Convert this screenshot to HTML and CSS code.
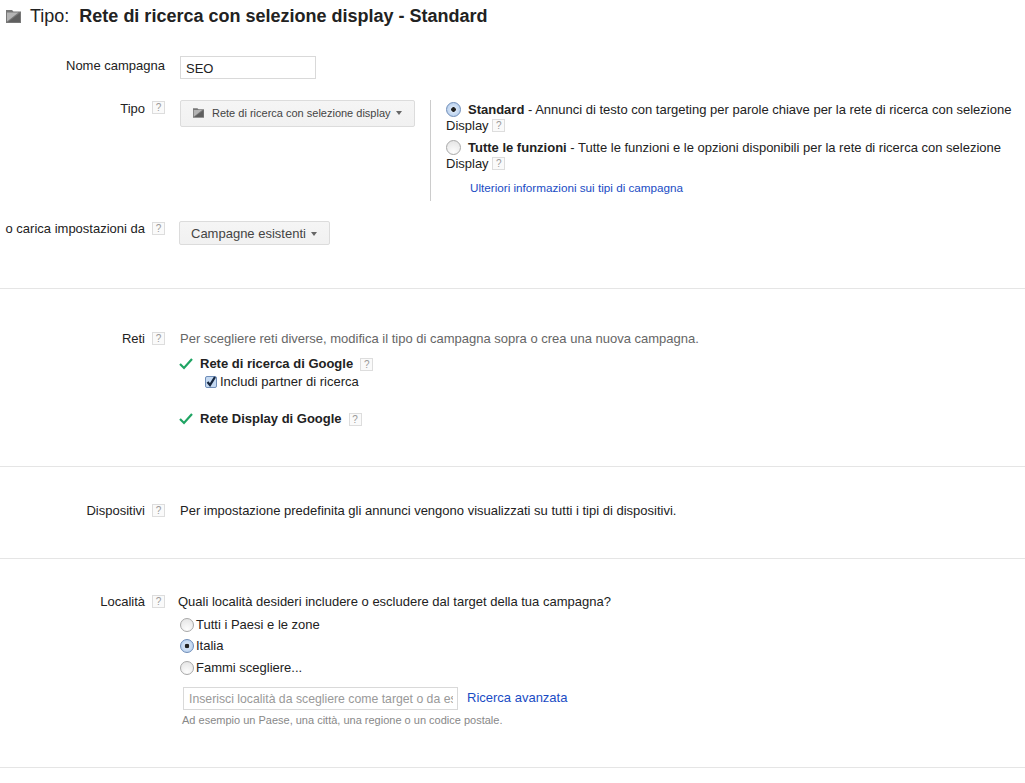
FILE: index.html
```html
<!DOCTYPE html>
<html lang="it">
<head>
<meta charset="utf-8">
<title>Tipo di campagna</title>
<link rel="stylesheet" href="styles.css">
</head>
<body>
<svg class="defs" width="0" height="0" aria-hidden="true">
  <defs>
    <symbol id="folder" viewBox="0 0 15 13">
      <path d="M0 0h6l1.5 1.5H15V13H0z" fill="#777"/>
      <path d="M1 2.5h11.5L1 11.5z" fill="#b4b4b4"/>
      <path d="M2 12 14 3v9z" fill="#5f5f5f"/>
    </symbol>
    <symbol id="check" viewBox="0 0 14 12">
      <path d="M1 6 5 10 13 1" fill="none" stroke="#1fa463" stroke-width="2.2"/>
    </symbol>
  </defs>
</svg>
<header class="title">
  <svg class="title-icon"><use href="#folder"/></svg>
  <span class="title-label">Tipo:</span>
  <strong class="title-value">Rete di ricerca con selezione display - Standard</strong>
</header>

<section class="section section-type">
  <div class="row row-name">
    <div class="label label-wide">Nome campagna</div>
    <div class="name-input">SEO</div>
  </div>
  <div class="row row-tipo">
    <div class="label">Tipo</div>
    <div class="help-slot"><span class="help">?</span></div>
    <div class="btn btn-type"><svg class="btn-icon"><use href="#folder"/></svg>Rete di ricerca con selezione display<span class="caret"></span></div>
    <div class="type-options">
      <p class="opt"><span class="radio on opt-radio"></span><b>Standard</b> - Annunci di testo con targeting per parole chiave per la rete di ricerca con selezione Display <span class="help">?</span></p>
      <p class="opt"><span class="radio opt-radio"></span><b>Tutte le funzioni</b> - Tutte le funzioni e le opzioni disponibili per la rete di ricerca con selezione Display <span class="help">?</span></p>
      <a class="link more">Ulteriori informazioni sui tipi di campagna</a>
    </div>
  </div>
  <div class="row row-load">
    <div class="label">o carica impostazioni da</div>
    <div class="help-slot"><span class="help">?</span></div>
    <div class="btn btn-load">Campagne esistenti<span class="caret"></span></div>
  </div>
</section>

<section class="section section-net">
  <div class="row">
    <div class="label">Reti</div>
    <div class="help-slot"><span class="help">?</span></div>
    <div class="content">
      <div class="muted">Per scegliere reti diverse, modifica il tipo di campagna sopra o crea una nuova campagna.</div>
      <div class="net net-first"><svg class="check"><use href="#check"/></svg><b>Rete di ricerca di Google</b><span class="help">?</span></div>
      <div class="partner"><span class="checkbox"><svg viewBox="0 0 12 12"><path d="M2.5 6 5 9 10 1" fill="none" stroke="#16263e" stroke-width="2.3"/></svg></span>Includi partner di ricerca</div>
      <div class="net net-second"><svg class="check"><use href="#check"/></svg><b>Rete Display di Google</b><span class="help">?</span></div>
    </div>
  </div>
</section>

<section class="section section-dev">
  <div class="row">
    <div class="label">Dispositivi</div>
    <div class="help-slot"><span class="help">?</span></div>
    <div class="content">Per impostazione predefinita gli annunci vengono visualizzati su tutti i tipi di dispositivi.</div>
  </div>
</section>

<section class="section section-loc">
  <div class="row">
    <div class="label">Località</div>
    <div class="help-slot"><span class="help">?</span></div>
    <div class="content content-loc">
      <div class="question">Quali località desideri includere o escludere dal target della tua campagna?</div>
      <div class="choice"><span class="radio"></span>Tutti i Paesi e le zone</div>
      <div class="choice"><span class="radio on"></span>Italia</div>
      <div class="choice"><span class="radio"></span>Fammi scegliere...</div>
      <div class="search">
        <div class="search-input"><span>Inserisci località da scegliere come target o da escludere</span></div>
        <a class="link adv">Ricerca avanzata</a>
      </div>
      <div class="hint">Ad esempio un Paese, una città, una regione o un codice postale.</div>
    </div>
  </div>
</section>
</body>
</html>
```

FILE: styles.css
```css
* { box-sizing: border-box; }
html, body { margin: 0; padding: 0; }
body {
  width: 1025px;
  height: 783px;
  overflow: hidden;
  background: #fff;
  color: #222;
  font-family: "Liberation Sans", Arial, sans-serif;
  font-size: 13px;
  line-height: 16px;
}
.defs { position: absolute; }
b { font-weight: 700; }
p { margin: 0; }

.title {
  display: flex;
  align-items: center;
  height: 32px;
  padding-left: 6px;
}
.title-icon { width: 15px; height: 13px; margin-right: 9px; }
.title-label { font-size: 18px; margin-right: 10px; }
.title-value { font-size: 18px; }

.section { border-bottom: 1px solid #e5e5e5; }
.section-type { height: 257px; padding-top: 24px; }
.section-net { height: 178px; padding-top: 42px; }
.section-dev { height: 92px; padding-top: 36px; }
.section-loc { height: 209px; padding-top: 35px; }

.row { display: flex; align-items: flex-start; }
.label { width: 145px; text-align: right; white-space: nowrap; flex: none; }
.label-wide { width: 165px; margin-right: 15px; padding-top: 1px; }
.help-slot { width: 35px; flex: none; padding-left: 7px; }
.help {
  display: inline-block;
  width: 13px;
  height: 13px;
  border: 1px solid #ddd;
  background: #fafafa;
  color: #999;
  font-size: 10px;
  line-height: 11px;
  text-align: center;
  vertical-align: 1px;
}

.row-name { height: 24px; margin-bottom: 20px; }
.row-name .label { padding-top: 2px; }
.name-input {
  width: 136px;
  height: 23px;
  border: 1px solid #d9d9d9;
  padding: 4px 5px;
  line-height: 15px;
}

.btn {
  display: flex;
  align-items: center;
  border: 1px solid #dcdcdc;
  border-radius: 2px;
  background: linear-gradient(#f5f5f5, #f1f1f1);
  color: #444;
  white-space: nowrap;
}
.btn-type { width: 235px; height: 27px; padding: 0 0 2px 12px; font-size: 11px; flex: none; }
.btn-icon { width: 11px; height: 10px; margin-right: 8px; }
.btn-load { width: 151px; height: 24px; padding: 1px 0 0 11px; margin-left: -1px; }
.caret {
  width: 0;
  height: 0;
  margin-left: 5px;
  border: 3.5px solid transparent;
  border-top: 4px solid #666;
  border-bottom: 0;
}

.row-tipo { height: 101px; margin-bottom: 20px; }
.row-tipo > .label { padding-top: 1px; }
.type-options {
  width: 595px;
  height: 101px;
  margin-left: 15px;
  padding: 2px 0 0 15px;
  border-left: 1px solid #ccc;
  flex: none;
  line-height: 16px;
}
.opt { margin-bottom: 6px; }
.opt-radio { margin: 0 7px 0 0; vertical-align: -3px; }
.more { display: block; padding-left: 24px; margin-top: 8px; font-size: 11.7px; line-height: 16px; }
.link { color: #1a4cc4; }

.radio {
  display: inline-block;
  width: 15px;
  height: 15px;
  border-radius: 50%;
  border: 1px solid #a8a8a8;
  background: radial-gradient(circle at 50% 85%, #fdfdfd, #e2e2e2);
  flex: none;
}
.radio.on {
  border-color: #6f8db8;
  background: radial-gradient(circle, #222 0 2px, transparent 2.6px), radial-gradient(circle, #e9f1fb, #a9c6ea);
}

.row-load { height: 26px; }

.content { flex: none; white-space: nowrap; color: #222; }
.muted { color: #666; }
.net { display: flex; align-items: center; }
.net-first { margin-top: 9px; }
.net-second { margin-top: 21px; }
.check { width: 14px; height: 12px; margin-right: 7px; margin-left: -1px; }
.net .help { margin-left: 7px; vertical-align: 0; }
.partner { display: flex; align-items: center; padding-left: 25px; margin-top: 2px; }
.checkbox {
  width: 12px;
  height: 12px;
  margin-right: 3px;
  border: 1px solid #6f8db8;
  border-radius: 2px;
  background: #c5d9f1;
  display: block;
}
.checkbox svg { display: block; width: 12px; height: 12px; margin: -1px 0 0 -1px; }

.content-loc { margin-left: -2px; }
.question { margin-bottom: 4px; }
.choice { display: flex; align-items: center; height: 21.5px; padding-left: 2px; }
.choice .radio { margin-right: 2px; width: 14px; height: 14px; }
.search { display: flex; align-items: center; margin: 8px 0 0 5px; }
.search-input {
  width: 275px;
  height: 23px;
  border: 1px solid #d9d9d9;
  padding: 3px 5px;
  color: #999;
  font-size: 12.25px;
  overflow: hidden;
}
.search-input span { display: block; width: 264px; overflow: hidden; white-space: nowrap; }
.adv { margin-left: 9px; }
.hint { margin: 3px 0 0 4px; color: #888; font-size: 11px; line-height: 14px; }
```
